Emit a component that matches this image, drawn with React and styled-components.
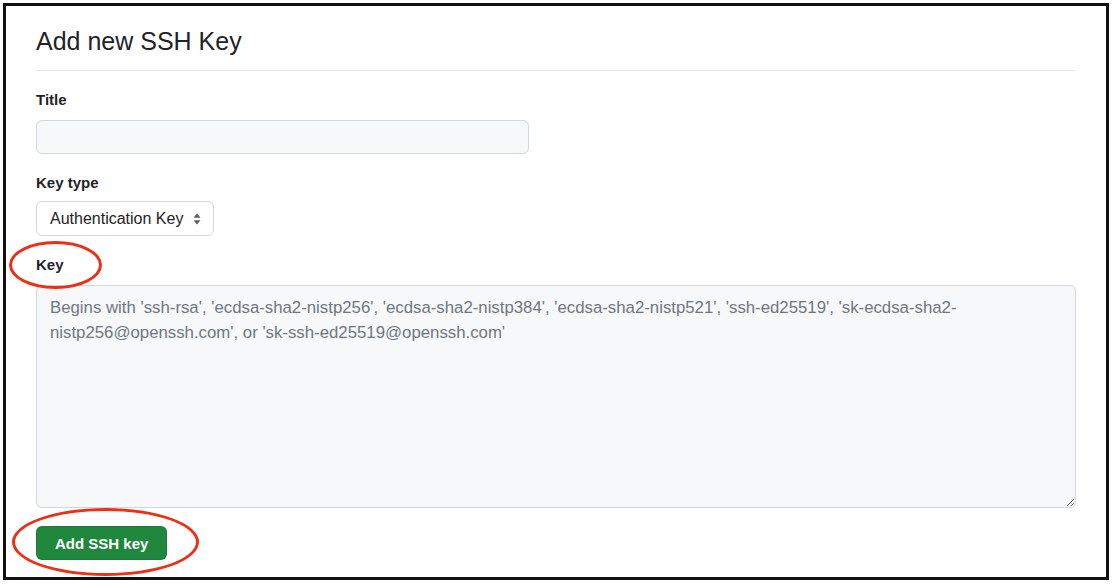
import React from 'react';
import styled, { createGlobalStyle } from 'styled-components';

const GlobalStyle = createGlobalStyle`
 html, body {
  margin: 0;
  padding: 0;
  background: #ffffff;
 }
 body {
  font-family: "Liberation Sans", Arial, sans-serif;
  color: #1f2328;
 }
 * {
  box-sizing: border-box;
 }
`;

const Frame = styled.div`
 position: relative;
 margin: 3px 0 0 3px;
 width: 1106px;
 height: 577px;
 border: 3px solid #111111;
 background: #ffffff;
 padding: 17px 31px 0 30px;
`;

const Header = styled.div`
 padding-bottom: 11px;
 border-bottom: 1px solid #e3e7eb;
`;

const Heading = styled.h2`
 margin: 0;
 font-size: 25px;
 line-height: 36px;
 font-weight: 400;
 color: #1f2328;
`;

const Form = styled.form`
 display: flex;
 flex-direction: column;
 align-items: flex-start;
`;

const Label = styled.label`
 display: block;
 margin-top: 19px;
 font-size: 15px;
 line-height: 20px;
 font-weight: 700;
 color: #1f2328;
`;

const TextInput = styled.input`
 margin-top: 10px;
 width: 493px;
 height: 34px;
 padding: 5px 12px;
 font: inherit;
 font-size: 16px;
 background: #f6f8fa;
 border: 1px solid #d0d7de;
 border-radius: 6px;
 outline: none;
`;

const SelectWrap = styled.div`
 position: relative;
 margin-top: 8px;
 display: flex;
 align-items: center;
`;

const Select = styled.select`
 appearance: none;
 -webkit-appearance: none;
 width: 178px;
 height: 35px;
 padding: 0 28px 0 13px;
 font-family: "Liberation Sans", Arial, sans-serif;
 font-size: 16px;
 color: #1f2328;
 background: #ffffff;
 border: 1px solid #d0d7de;
 border-radius: 6px;
 outline: none;
`;

const Caret = styled.svg`
 position: absolute;
 right: 13px;
 top: 50%;
 transform: translateY(-50%);
 pointer-events: none;
`;

const KeyArea = styled.textarea`
 margin-top: 10px;
 width: 1040px;
 height: 223px;
 padding: 9px 13px;
 font-family: "Liberation Sans", Arial, sans-serif;
 font-size: 16.8px;
 line-height: 25px;
 color: #1f2328;
 background: #f6f8fa;
 border: 1px solid #d0d7de;
 border-radius: 6px;
 outline: none;
 resize: vertical;

 &::placeholder {
  color: #6e7781;
 }
`;

const SubmitButton = styled.button`
 margin-top: 18px;
 height: 34px;
 padding: 0 18px;
 font-family: "Liberation Sans", Arial, sans-serif;
 font-size: 15px;
 font-weight: 700;
 color: #ffffff;
 background: #1f883d;
 border: 1px solid rgba(31, 35, 40, 0.15);
 border-radius: 6px;
 cursor: pointer;
`;

const Ring = styled.div`
 position: absolute;
 left: ${p => p.x}px;
 top: ${p => p.y}px;
 width: ${p => p.w}px;
 height: ${p => p.h}px;
 border: 3px solid #ec2f17;
 border-radius: 50%;
 pointer-events: none;
`;

const placeholder =
 "Begins with 'ssh-rsa', 'ecdsa-sha2-nistp256', 'ecdsa-sha2-nistp384', 'ecdsa-sha2-nistp521', 'ssh-ed25519', 'sk-ecdsa-sha2-nistp256@openssh.com', or 'sk-ssh-ed25519@openssh.com'";

const App = () => {
 return (
  <>
   <GlobalStyle />
   <Frame>
    <Header>
     <Heading>Add new SSH Key</Heading>
    </Header>
    <Form onSubmit={e => e.preventDefault()}>
     <Label htmlFor="title">Title</Label>
     <TextInput id="title" type="text" />

     <Label htmlFor="type">Key type</Label>
     <SelectWrap>
      <Select id="type" defaultValue="auth">
       <option value="auth">Authentication Key</option>
       <option value="sign">Signing Key</option>
      </Select>
      <Caret width="8" height="12" viewBox="0 0 8 12">
       <path d="M4 0.5 L7.5 4.8 H0.5 Z" fill="#57606a" />
       <path d="M4 11.5 L7.5 7.2 H0.5 Z" fill="#57606a" />
      </Caret>
     </SelectWrap>

     <Label htmlFor="key">Key</Label>
     <KeyArea id="key" placeholder={placeholder} />

     <SubmitButton type="submit">Add SSH key</SubmitButton>
    </Form>

    <Ring x={3} y={235} w={93} h={48} />
    <Ring x={6} y={502} w={187} h={68} />
   </Frame>
  </>
 );
};

export default App;
